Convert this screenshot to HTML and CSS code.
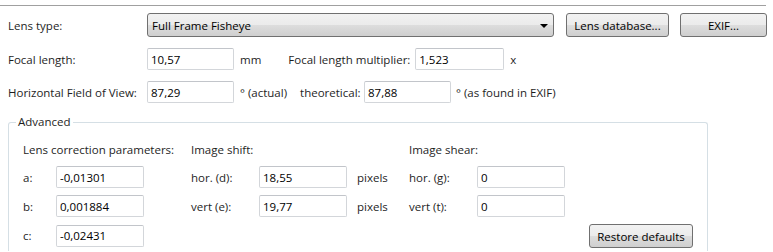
FILE: index.html
```html
<!DOCTYPE html>
<html lang="en">
<head>
  <meta charset="UTF-8" />
  <title>Lens settings</title>
  <link rel="stylesheet" href="styles.css">
</head>
<body>
  <div class="topline"></div>

  <!-- lens row -->
  <div class="row row-lens">
    <span class="label">Lens type:</span>
    <div class="combo">
      <span>Full Frame Fisheye</span>
      <span class="arrow"></span>
    </div>
    <button class="btn btn-db">Lens database...</button>
    <button class="btn btn-exif">EXIF...</button>
  </div>

  <div class="row">
    <span class="label">Focal length:</span>
    <input class="field" value="10,57">
    <span class="unit">mm</span>
    <span class="label-mult">Focal length multiplier:</span>
    <input class="field field-mult" value="1,523">
    <span class="unit">x</span>
  </div>

  <div class="row">
    <span class="label">Horizontal Field of View:</span>
    <input class="field" value="87,29">
    <span class="unit">° (actual)</span>
    <span class="label-theo">theoretical:</span>
    <input class="field field-theo" value="87,88">
    <span class="unit unit-theo">° (as found in EXIF)</span>
  </div>

  <!-- advanced group -->
  <fieldset class="group">
    <legend>Advanced</legend>
    <div class="adv-grid">
      <span class="head head-lens">Lens correction parameters:</span>
      <span class="head head-shift">Image shift:</span>
      <span class="head head-shear">Image shear:</span>

      <span class="c1">a:</span>
      <input class="field" value="-0,01301">
      <span class="c4">hor. (d):</span>
      <input class="field" value="18,55">
      <span class="c7">pixels</span>
      <span>hor. (g):</span>
      <input class="field" value="0">

      <span class="c1">b:</span>
      <input class="field" value="0,001884">
      <span class="c4">vert (e):</span>
      <input class="field" value="19,77">
      <span class="c7">pixels</span>
      <span>vert (t):</span>
      <input class="field" value="0">

      <span class="c1">c:</span>
      <input class="field" value="-0,02431">
      <button class="btn btn-restore">Restore defaults</button>
    </div>
  </fieldset>
</body>
</html>
```

FILE: styles.css
```css
  body {
    margin: 0;
    padding: 5px 0 0 0;
    font-family: 'Open Sans', 'Noto Sans', sans-serif;
    font-size: 11.5px;
    color: #1e1e1e;
    background: #fff;
    overflow: hidden;
  }

  .topline {
    width: 766px;
    border-top: 1px solid #a0a0a0;
  }

  /* rows at top */
  .row {
    display: flex;
    align-items: center;
    height: 22px;
    margin-top: 11px;
    padding-left: 8px;
  }

  .row-lens {
    height: 24px;
    margin-top: 7px;
  }

  .label {
    width: 139px;
  }

  .combo {
    box-sizing: border-box;
    width: 407px;
    height: 24px;
    display: flex;
    align-items: center;
    justify-content: space-between;
    padding: 0 5px 0 4px;
    border: 1px solid #707070;
    border-radius: 3px;
    background: linear-gradient(#f2f2f2 0%, #ebebeb 50%, #dddddd 51%, #cfcfcf 100%);
    color: #000;
  }

  .arrow {
    width: 0;
    height: 0;
    border-left: 4px solid transparent;
    border-right: 4px solid transparent;
    border-top: 4px solid #000;
    margin-top: 1px;
  }

  .btn {
    box-sizing: border-box;
    height: 24px;
    font: inherit;
    color: #000;
    border: 1px solid #707070;
    border-radius: 3px;
    background: linear-gradient(#f2f2f2 0%, #ebebeb 50%, #dddddd 51%, #cfcfcf 100%);
    padding: 0;
  }

  .btn-db {
    width: 103px;
    margin-left: 12px;
  }

  .btn-exif {
    width: 87px;
    margin-left: 11px;
  }

  .field {
    box-sizing: border-box;
    width: 87px;
    height: 22px;
    font: inherit;
    color: #000;
    border: 1px solid #d3d6da;
    border-top-color: #c2c5ca;
    border-radius: 2px;
    padding: 0 3px;
    margin: 0;
  }

  .unit {
    margin-left: 6px;
  }

  .label-mult {
    margin-left: 27px;
    width: 127px;
  }

  .field-mult {
    width: 89px;
  }

  .label-theo {
    margin-left: 13px;
    width: 64px;
  }

  .unit-theo {
    margin-left: 5px;
  }

  /* Advanced group */
  .group {
    box-sizing: border-box;
    width: 700px;
    height: 137px;
    margin: 11px 0 0 8px;
    padding: 0;
    border: 1px solid #d5dfe5;
    border-bottom: none;
    border-radius: 3px 3px 0 0;
  }

  .group legend {
    margin-left: 7px;
    padding: 0 2px;
    line-height: 16px;
  }

  .adv-grid {
    display: grid;
    grid-template-columns: 33px 87px 48px 68px 88px 10px 52px 68px 88px 1fr;
    grid-template-rows: 20px 22px 22px 23px;
    row-gap: 7px;
    align-items: center;
    margin: 9px 14px 0 14px;
  }

  .adv-grid .field {
    width: 88px;
  }

  .head-lens {
    grid-column: 1 / span 3;
  }

  .head-shift {
    grid-column: 4 / span 3;
  }

  .head-shear {
    grid-column: 8 / span 2;
  }

  .c1 {
    grid-column: 1;
  }

  .c4 {
    grid-column: 4;
  }

  .c7 {
    grid-column: 7;
  }

  .btn-restore {
    grid-column: 8 / -1;
    justify-self: end;
    width: 104px;
    height: 24px;
    margin-top: 1px;
  }
```
